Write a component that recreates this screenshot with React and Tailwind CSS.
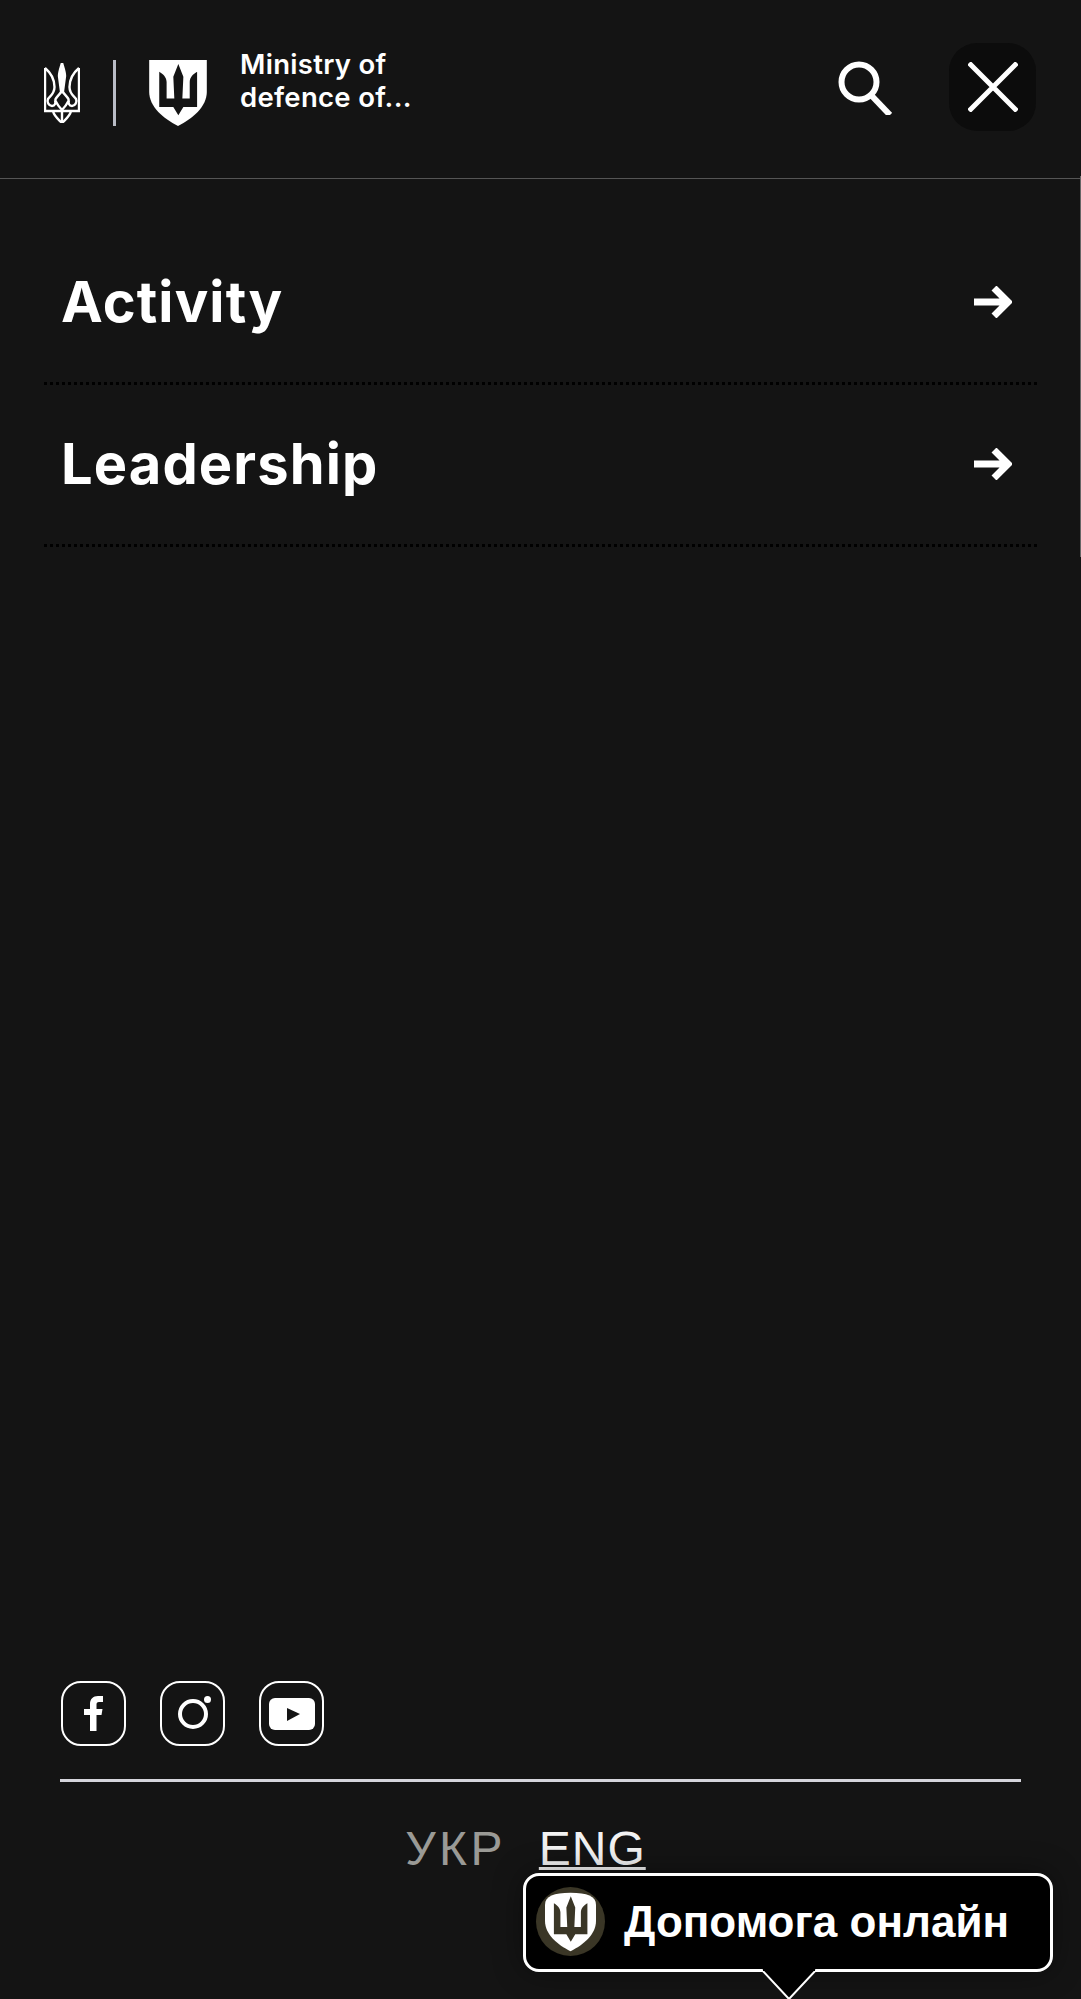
const NAV_ITEMS = ['Activity', 'Leadership'];

const SHIELD_TRIDENT =
  'M30 35 C42 42 52 52 52 66 L52 115 L75 115 L72 50 L87 12 L102 50 L99 115 L121 115 L121 66 C121 52 131 42 143 35 L143 140 L102 140 L87 165 L72 140 L30 140 Z';

function Trident() {
  return (
    <svg viewBox="0 0 36 60" className="w-[36px] h-[60px]" fill="none" stroke="white" strokeWidth="2.4">
      <path d="M18 0 C16.500 5 15 9 15 13 L17 28 H19 L21 13 C21 9 19.500 5 18 0 Z" fill="white" />
      <path d="M1 5 V48 H35 V5" />
      <path d="M1 5 C7 10 10.500 15 10.500 24 C10.500 31 6 33 4 36 C2.500 39 5 43 8 43 C11 43 12 40 11 37 C13 41 15 44 18 47 C21 44 23 41 25 37 C24 40 25 43 28 43 C31 43 33.500 39 32 36 C30 33 25.500 31 25.500 24 C25.500 15 29 10 35 5" />
      <path d="M11 37 C13 33 16 31 18 28 C20 31 23 33 25 37" />
      <path d="M9 48 C10 53 14 56 18 60 C22 56 26 53 27 48" />
      <path d="M18 47 V60" />
    </svg>
  );
}

function Shield({ className, trident, rounded }) {
  const outline = rounded
    ? 'M0 40 C0 12 30 0 86 0 C142 0 172 12 172 40 V95 C172 140 130 175 86 197 C42 175 0 140 0 95 Z'
    : 'M0 0 H172 V95 C172 140 130 175 86 197 C42 175 0 140 0 95 Z';
  return (
    <svg viewBox="0 0 172 197" className={className}>
      <path d={outline} fill="white" />
      <path d={SHIELD_TRIDENT} fill={trident} />
    </svg>
  );
}

function SocialBox({ children }) {
  return (
    <a className="w-[65px] h-[65px] rounded-[20px] border-[2.5px] border-white flex items-center justify-center">
      {children}
    </a>
  );
}

export default function App() {
  return (
    <div className="relative w-full h-[1999px] overflow-hidden bg-[#141414] text-white flex flex-col font-['Inter',sans-serif]">
      {/* Header */}
      <header className="h-[179px] flex-none flex items-center border-b border-[#555555] pl-[44px] pr-[45px]">
        <div className="flex items-center mt-[8px]">
          <Trident />
          <div className="w-[3px] h-[66px] bg-[#b9bcc6] ml-[33px] mr-[33px]" />
          <Shield className="w-[58px] h-[66px]" trident="#141414" />
        </div>
        <div className="ml-[33px] text-[27.5px] leading-[33px] font-semibold tracking-[0.3px] mt-[-16px]">
          Ministry of
          <br />
          defence of...
        </div>
        <button className="ml-auto mr-[57px] w-[60px] h-[60px] mt-[-9px]">
          <svg viewBox="0 0 60 60" className="w-[60px] h-[60px]" fill="none" stroke="white" strokeWidth="6">
            <circle cx="27" cy="27" r="17.500" />
            <path d="M38 39 L58 60" />
          </svg>
        </button>
        <button className="w-[87px] h-[88px] rounded-[28px] bg-[#0c0c0c] flex items-center justify-center mt-[-4px]">
          <svg viewBox="0 0 50 50" className="w-[50px] h-[50px]" fill="none" stroke="white" strokeWidth="5">
            <path d="M1 1 L49 49 M49 1 L1 49" />
          </svg>
        </button>
      </header>
      <div className="absolute right-0 top-[176px] w-px h-[381px] bg-[#666666]" />

      {/* Menu */}
      <nav className="flex flex-col pl-[44px] pr-[44px]">
        {NAV_ITEMS.map((item, i) => (
          <a
            key={item}
            className={`flex items-center justify-between border-b-[3px] border-dotted border-black pl-[17px] pr-[25px] ${i === 0 ? 'h-[206px] pt-[43px]' : 'h-[162px] pb-[2px]'}`}
          >
            <span className="text-[56px] leading-none font-bold tracking-[0.02em]">{item}</span>
            <svg viewBox="0 0 38 32" className="w-[38px] h-[32px]" fill="none" stroke="white" strokeWidth="7">
              <path d="M0 16 H33 M20 2 L34 16 L20 30" />
            </svg>
          </a>
        ))}
      </nav>

      {/* Footer */}
      <footer className="mt-auto px-[60px] pb-[124px]">
        <div className="flex gap-[34px] pl-px">
          <SocialBox>
            <svg viewBox="0 0 19 35" className="w-[19px] h-[35px]" fill="white">
              <path d="M6 35 V19 H0 V13 H6 V8 C6 3 9 0 14 0 H19 V6 H15 C13 6 12.500 7 12.500 8.500 V13 H18.500 L17.500 19 H12.500 V35 Z" />
            </svg>
          </SocialBox>
          <SocialBox>
            <svg viewBox="0 0 40 40" className="w-[40px] h-[40px]" fill="none" stroke="white" strokeWidth="4">
              <circle cx="20" cy="20" r="13" />
              <circle cx="34.500" cy="5.500" r="3.500" fill="white" stroke="none" />
            </svg>
          </SocialBox>
          <SocialBox>
            <svg viewBox="0 0 46 32" className="w-[46px] h-[32px]">
              <rect width="46" height="32" rx="6" fill="white" />
              <path d="M18 10 L31 16 L18 23 Z" fill="#141414" />
            </svg>
          </SocialBox>
        </div>
        <div className="h-[3px] bg-[#d5d5dc] mt-[33px]" />
        <div className="flex justify-center gap-[33px] pr-[30px] mt-[41px] font-['Liberation_Sans',sans-serif] text-[48px] leading-[52px]">
          <span className="text-[#9a9a96] tracking-[0.07em]">УКР</span>
          <span className="text-[#f2f2f2] tracking-[0.02em] underline decoration-[3px] underline-offset-[2px]">ENG</span>
        </div>
      </footer>

      {/* Chat widget */}
      <div className="absolute left-[523px] top-[1873px] w-[530px] h-[99px] rounded-[16px] bg-black border-[3px] border-white flex items-center pl-[10px] shadow-[0_0_30px_rgba(0,0,0,0.4)]">
        <div className="w-[69px] h-[69px] rounded-full bg-[#3a3626] flex items-center justify-center mt-[-2px]">
          <Shield className="w-[51px] h-[60px]" trident="#3a3626" rounded />
        </div>
        <span className="ml-[19px] mt-[-2px] font-['Liberation_Sans',sans-serif] font-bold text-[44px] leading-none whitespace-nowrap">
          Допомога онлайн
        </span>
      </div>
      <svg viewBox="0 0 56 30" className="absolute left-[761px] top-[1969px] w-[56px] h-[30px]">
        <path d="M0 0 L28 30 L56 0" fill="black" stroke="white" strokeWidth="2" />
        <path d="M2 0 H54" stroke="black" strokeWidth="4" />
      </svg>
    </div>
  );
}
